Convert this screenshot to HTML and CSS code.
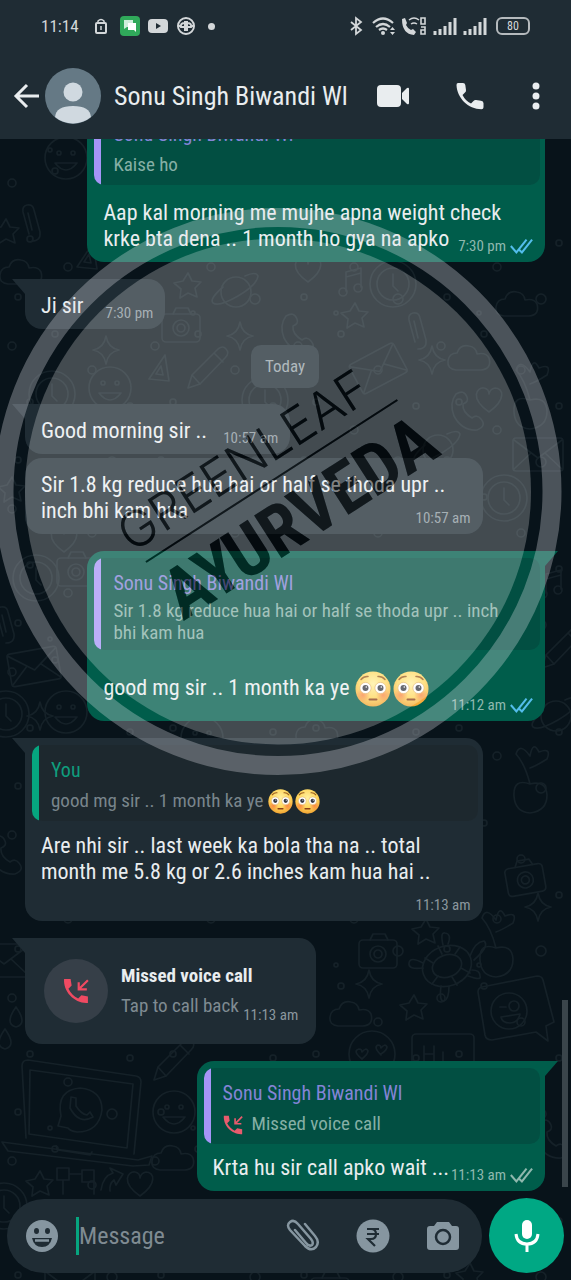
FILE: index.html
```html
<!DOCTYPE html>
<html lang="en">
<head>
<meta charset="utf-8">
<meta name="viewport" content="width=device-width, initial-scale=1">
<title>Sonu Singh Biwandi Wl</title>
<link rel="stylesheet" href="styles.css">
</head>
<body>
<svg class="defs" aria-hidden="true">
  <defs>
    <radialGradient id="skin" cx="50%" cy="35%" r="65%"><stop offset="0" stop-color="#fff0a0"/><stop offset=".6" stop-color="#ffd75e"/><stop offset="1" stop-color="#f2a432"/></radialGradient>
    <radialGradient id="blush"><stop offset="0" stop-color="#f8703e" stop-opacity=".75"/><stop offset="1" stop-color="#f8703e" stop-opacity="0"/></radialGradient>
    <symbol id="flushed" viewBox="0 0 36 36">
      <circle cx="18" cy="18" r="17.5" fill="url(#skin)"/>
      <circle cx="8" cy="24" r="7" fill="url(#blush)"/><circle cx="28" cy="24" r="7" fill="url(#blush)"/>
      <circle cx="10.500" cy="17" r="5.600" fill="#fff" stroke="#d9a050" stroke-width=".6"/><circle cx="25.500" cy="17" r="5.600" fill="#fff" stroke="#d9a050" stroke-width=".6"/>
      <circle cx="10.500" cy="17" r="3" fill="#383a44"/><circle cx="25.500" cy="17" r="3" fill="#383a44"/>
      <circle cx="11.300" cy="16" r=".8" fill="#fff"/><circle cx="26.300" cy="16" r=".8" fill="#fff"/>
      <path d="M6 8.500q3-3.500 7-3M30 8.500q-3-3.500-7-3" fill="none" stroke="#9a5b1d" stroke-width="1.500" stroke-linecap="round"/>
      <path d="M14.500 28.500h7" stroke="#8a3e17" stroke-width="2" stroke-linecap="round"/>
    </symbol>
    <symbol id="ticks" viewBox="0 0 26 18">
      <path d="M2 9l6 7L19 2M11 13l3 3L25 2" fill="none" stroke="currentColor" stroke-width="2.200"/>
    </symbol>
    <symbol id="missed" viewBox="0 0 24 24">
      <path d="M1 1h6l1 6-3 3c2 4 5 7 9 9l3-3 6 1v6C11 24 0 13 1 1z" fill="currentColor"/>
      <path d="M23 2l-8 8M14.500 4v6.500H22" fill="none" stroke="currentColor" stroke-width="2"/>
    </symbol>
    <symbol id="phone" viewBox="0 0 28 28">
      <path d="M2 1h5q2 0 2.300 2L10 8q.2 1.500-1 2.500L6.500 13q3 6 8.500 8.500l2.500-2.500q1-1.200 2.500-1l5 .8q2.500.4 2.500 2.500v4q0 2-2 2C12 27 1 16 .5 3q0-2 1.500-2z" fill="currentColor"/>
    </symbol>

    <g id="d-star"><path d="M0-13l4 8 9 1-6 6 2 9-9-4-8 5 1-9-7-6 9-2z"/></g>
    <g id="d-spark"><path d="M0-14q2 12 13 14-11 2-13 14-2-12-13-14 11-2 13-14z"/></g>
    <g id="d-planet"><circle r="15"/><path d="M-13-5q-14 12-10 16 6 4 25-7t20-20q-2-5-13 0"/></g>
    <g id="d-camera"><rect x="-19" y="-12" width="38" height="28" rx="4"/><circle cy="2" r="8"/><circle cy="2" r="4"/><path d="M-8-12l3-6H7l3 6"/></g>
    <g id="d-cloud"><path d="M-16 10q-9-1-8-9t9-8q3-9 12-7 7 1 8 8 9-2 12 4 3 11-8 12z"/></g>
    <g id="d-mail"><rect x="-25" y="-16" width="50" height="33" rx="3"/><path d="M-24-14L0 4 24-14M-24 15L-7-1M24 15L7-1"/></g>
    <g id="d-note"><path d="M-6 9V-10L9-14V5M-6-5L9-9"/><circle cx="-9" cy="10" r="4"/><circle cx="6" cy="6" r="4"/></g>
    <g id="d-heart"><path d="M0 12C-20-2-12-13-5-12Q0-11 0-6 1-11 6-12C14-12 18-1 0 12z"/></g>
    <g id="d-drop"><path d="M0-11Q12 6 0 9-12 6 0-11z"/></g>
    <g id="d-call"><path d="M-14-18q8-5 11 3 2 5-4 7-1 8 9 14 5-4 9 1 6 7-4 11-15 1-23-14-5-13 2-22z"/></g>
    <g id="d-smile"><circle r="21"/><circle cx="-7" cy="-5" r="2"/><circle cx="7" cy="-5" r="2"/><path d="M-11 5q11 14 22 0z"/></g>
    <g id="d-disc"><circle r="23"/><circle r="16"/><path d="M0-10V2l5 5"/></g>
    <g id="d-clip"><path d="M-9 12L-15-10q-1-6 4-7 6-1 7 5l6 22q1 9-8 9M-10-9L-6 8"/></g>
    <g id="d-plant"><path d="M0 20Q-5 0-14-10-10-22 0-8 3-24 9-12 22-17 17-5 6 2 0 4M0 20q-17-6-16 12 1 16 16 17 17-2 17-18-1-15-17-11z"/></g>
    <g id="d-pencil"><path d="M-18 18l4-13L12-21q5-4 8 0 4 4-1 9L-6 14zM-14 5l8 9M8-17l9 9"/></g>
    <g id="d-tri"><path d="M-9 11L7-13 11 13zM-2 6l5-8 2 9z"/></g>
    <g id="d-turtle"><ellipse rx="25" ry="20" transform="rotate(-20)"/><ellipse rx="15" ry="11" transform="rotate(-20)"/><path d="M-24 2q-15 2-14-5t14 0M23-10q5-14 14-15 6 5-10 19M-4-21q-3-13 2-12 7 1 3 11M-6 20q-2 16 3 15 5-2 5-15M21 10q14 5 12 0 0-6-8-6M-14-3l-8-5M-5-12l-4-8M8-12l5-7M14 2l9 5M5 11l5 8M-9 10l-6 8"/></g>
  </defs>
</svg>

<header class="top">
  <div class="status">
    <span class="clock">11:14</span>
    <svg class="lock" viewBox="0 0 12 16"><rect x="1" y="5" width="10" height="10" rx="1" fill="none" stroke="#d3d7d9" stroke-width="2"/><path d="M3 5V3q3-3 6 0v2M6 8v4" fill="none" stroke="#d3d7d9" stroke-width="1.500"/></svg>
    <svg class="app" viewBox="0 0 20 20"><rect width="20" height="20" rx="4" fill="#30a95a"/><path d="M4 4h9v7H7l-3 2z" fill="#cfeedb"/><path d="M8 7h8v9l-2-2H8z" fill="#fff"/></svg>
    <svg class="app" viewBox="0 0 20 20"><rect y="3" width="20" height="14" rx="4" fill="#d3d7d9"/><path d="M8 7l5 3-5 3z" fill="#1f2c34"/></svg>
    <svg class="app" viewBox="0 0 20 20"><circle cx="10" cy="10" r="8" fill="none" stroke="#d3d7d9" stroke-width="2"/><path d="M9 5v10M11 5v10M9 7q-5 0-4 4h10q1-4-4-4M2 10h3M15 10h3" fill="none" stroke="#d3d7d9" stroke-width="2"/></svg>
    <span class="dot"></span>
    <span class="grow"></span>
    <svg class="bt" viewBox="0 0 13 20"><path d="M1 6l10 8-5 4V2l5 4-10 8" fill="none" stroke="#d3d7d9" stroke-width="1.800"/></svg>
    <svg class="wifi" viewBox="0 0 25 20"><path d="M1 7q10-9 20 0M4 11q7-6 14 0M7 14q4-3 8 0" fill="none" stroke="#d3d7d9" stroke-width="2.200"/><circle cx="11" cy="17" r="2" fill="#d3d7d9"/><path d="M18 14l2.500-3 2.500 3zM18 16h5l-2.500 3z" fill="#d3d7d9"/></svg>
    <svg class="wifi" viewBox="0 0 25 20"><path d="M1 3l3-1 2 5-1 2q2 4 5 5l2-1 3 3-2 3Q1 18 1 3z" fill="#d3d7d9"/><path d="M8 4q5-4 10 0M10 8q3-2 6 0" fill="none" stroke="#d3d7d9" stroke-width="1.500"/><path d="M20 2h4v6h-4zM20 11h4v3h-4v4h4v-4" fill="none" stroke="#d3d7d9" stroke-width="1.600"/></svg>
    <svg class="bars" viewBox="0 0 24 18"><path d="M2 18v-4M7 18v-6M12 18V9M17 18V5M22 18V1" stroke="#d3d7d9" stroke-width="3"/></svg>
    <svg class="bars" viewBox="0 0 24 18"><path d="M2 18v-4M7 18v-6M12 18V9M17 18V5M22 18V1" stroke="#d3d7d9" stroke-width="3"/></svg>
    <span class="battery">80</span>
  </div>
  <div class="bar">
    <button class="icon" aria-label="Back"><svg width="26" height="26" viewBox="0 0 26 26"><path d="M14 2L3 13l11 11M3 13h23" fill="none" stroke="currentColor" stroke-width="3"/></svg></button>
    <svg class="avatar" viewBox="0 0 56 56"><circle cx="28" cy="28" r="28" fill="#657985"/><circle cx="28" cy="24" r="9.500" fill="#d0d9e0"/><path d="M10 49q1-11 18-11t18 11a28 28 0 0 1-36 0z" fill="#d0d9e0"/></svg>
    <h1>Sonu Singh Biwandi Wl</h1>
    <button class="icon video" aria-label="Video call"><svg width="34" height="24" viewBox="0 0 34 24"><rect x="1" y="1" width="24" height="22" rx="4" fill="currentColor"/><path d="M26 9l5-5q2-1 2 1v14q0 2-2 1l-5-5z" fill="currentColor"/></svg></button>
    <button class="icon call" aria-label="Voice call"><svg width="28" height="28"><use href="#phone"/></svg></button>
    <button class="icon" aria-label="More options"><svg width="8" height="28" viewBox="0 0 8 28"><circle cx="4" cy="4" r="3.500" fill="currentColor"/><circle cx="4" cy="14" r="3.500" fill="currentColor"/><circle cx="4" cy="24" r="3.500" fill="currentColor"/></svg></button>
  </div>
</header>

<main class="chat">
  <svg class="wallpaper" viewBox="0 139 571 1141" preserveAspectRatio="xMidYMin slice" aria-hidden="true">
    <defs><pattern id="dots" width="143" height="163" patternUnits="userSpaceOnUse"><g fill="none" stroke="#152128" stroke-width="1.500"><circle cx="12" cy="20" r="4"/><circle cx="55" cy="8" r="3"/><circle cx="92" cy="44" r="4"/><circle cx="130" cy="80" r="3"/><circle cx="30" cy="76" r="3"/><circle cx="68" cy="104" r="4"/><circle cx="112" cy="136" r="5"/><circle cx="18" cy="134" r="3"/><circle cx="50" cy="150" r="2"/></g></pattern></defs>
    <rect y="139" width="571" height="1141" fill="url(#dots)"/>
    <g fill="none" stroke="#152128" stroke-width="1.700" stroke-linejoin="round" stroke-linecap="round">
      <use href="#d-smile" x="66" y="158"/><use href="#d-clip" x="38" y="222"/><use href="#d-cloud" x="24" y="274"/><use href="#d-star" x="6" y="232"/><use href="#d-tri" x="86" y="256"/>
      <use href="#d-star" x="188" y="286"/><use href="#d-planet" x="236" y="292"/><use href="#d-heart" x="308" y="270"/><use href="#d-note" x="352" y="282"/><use href="#d-disc" x="393" y="284"/><use href="#d-cloud" x="520" y="306"/><use href="#d-star" x="355" y="316"/>
      <use href="#d-camera" x="181" y="326"/><use href="#d-call" x="300" y="334"/><use href="#d-spark" x="240" y="336"/><use href="#d-clip" x="424" y="330"/><use href="#d-mail" x="378" y="368" transform="rotate(-28 378 368)"/><use href="#d-spark" x="432" y="360"/><use href="#d-cloud" x="472" y="360"/><use href="#d-spark" x="106" y="350"/>
      <use href="#d-tri" x="158" y="368"/><use href="#d-pencil" x="206" y="370"/><use href="#d-disc" x="52" y="394"/><use href="#d-smile" x="110" y="388"/><use href="#d-disc" x="265" y="400"/><use href="#d-call" x="470" y="412"/><use href="#d-heart" x="489" y="400"/><use href="#d-plant" x="530" y="380"/>
      <use href="#d-planet" x="438" y="450"/><use href="#d-disc" x="504" y="498"/><use href="#d-mail" x="538" y="454"/><use href="#d-star" x="12" y="490"/><use href="#d-disc" x="36" y="578"/><use href="#d-camera" x="76" y="570"/><use href="#d-heart" x="64" y="540"/><use href="#d-note" x="552" y="584"/>
      <use href="#d-mail" x="34" y="666" transform="rotate(-10 34 666)"/><use href="#d-clip" x="12" y="624"/><use href="#d-smile" x="66" y="712"/><use href="#d-spark" x="40" y="716"/><use href="#d-disc" x="6" y="714"/><use href="#d-planet" x="556" y="716"/><use href="#d-pencil" x="560" y="650"/>
      <use href="#d-cloud" x="320" y="734"/><use href="#d-smile" x="202" y="738"/><use href="#d-plant" x="530" y="764"/><use href="#d-camera" x="525" y="878" transform="rotate(-10 525 878)"/><use href="#d-spark" x="538" y="907"/><use href="#d-plant" x="496" y="928"/><use href="#d-turtle" x="447" y="966"/><use href="#d-star" x="426" y="932"/>
      <use href="#d-star" x="414" y="1008"/><use href="#d-camera" x="378" y="952"/><use href="#d-cloud" x="354" y="1016"/><use href="#d-spark" x="369" y="984"/><use href="#d-call" x="8" y="856"/><use href="#d-mail" x="4" y="960"/><use href="#d-drop" x="5" y="1040"/><use href="#d-drop" x="16" y="1018"/>
      <path d="M478 992q0-4 4-5l55-11q5 0 6 4l11 42-8 4 2 15-12-9-44 8q-6 0-7-5z"/><circle cx="509" cy="1011" r="18"/><circle cx="514" cy="1006" r="5"/><path d="M500 1007h6M501 1017l19-3q-2 9-10 9-8 0-9-6z"/>
      <circle cx="372" cy="1054" r="23"/><path d="M362 1059q-10-8-3-10 3 0 3 3 4-5 6-1 0 3-6 8M381 1055q-8-8-3-10 3 0 3 3 4-5 6-1 0 3-6 7"/><rect x="412" y="1034" width="62" height="45" rx="4"/><path d="M424 1046v16M434 1046v16M424 1054h10M443 1052v10"/>
      <path d="M26 1138L22 1066q0-6 6-6l108 16q5 1 5 6l-7 72M29 1134l1-64 103 14-6 64zM2 1142l136 18 14-4-3 9-16 1L8 1151zM56 1146l2 4 32 5 2-3M58 1126l3-10q-5-26 19-28 22 2 22 22-3 22-25 22-7-1-9-4z"/><path d="M71 1097l5 1v8q5 8 11 9l3-3 3 5q-14 8-23-9z"/>
      <use href="#d-pencil" x="172" y="1062"/><use href="#d-smile" x="174" y="1112"/><use href="#d-cloud" x="176" y="1160"/><use href="#d-star" x="40" y="1184"/><path d="M57 1168h12v12H57zM82 1170h12v12H82zM69 1174h13M63 1180v14M94 1180v14M101 1190q2-14 12-17l-3-5 13 6-7 11-2-5q-5 4-4 11"/><use href="#d-disc" x="4" y="1206"/><use href="#d-heart" x="140" y="1184"/><use href="#d-call" x="554" y="1140"/><use href="#d-star" x="470" y="1276"/><use href="#d-mail" x="70" y="1286"/><use href="#d-camera" x="330" y="1290"/>
    </g>
  </svg>

  <section class="messages" aria-label="Messages">
    <article class="msg out wide first">
      <blockquote class="quote"><cite>Sonu Singh Biwandi Wl</cite><p>Kaise ho</p></blockquote>
      <p class="text">Aap kal morning me mujhe apna weight check<br>krke bta dena .. 1 month ho gya na apko<span class="meta">7:30 pm <svg class="read"><use href="#ticks"/></svg></span></p>
    </article>
    <article class="msg in tail short"><p class="text">Ji sir<span class="meta">7:30 pm</span></p></article>
    <div class="day">Today</div>
    <article class="msg in tail mid"><p class="text">Good morning sir ..<span class="meta">10:57 am</span></p></article>
    <article class="msg in wide next"><p class="text">Sir 1.8 kg reduce hua hai or half se thoda upr ..<br>inch bhi kam hua<span class="meta">10:57 am</span></p></article>
    <article class="msg out tail wide">
      <blockquote class="quote long"><cite>Sonu Singh Biwandi Wl</cite><p>Sir 1.8 kg reduce hua hai or half se thoda upr .. inch<br>bhi kam hua</p></blockquote>
      <p class="text tall">good mg sir .. 1 month ka ye <svg class="emoji" role="img" aria-label="😳"><use href="#flushed"/></svg><svg class="emoji" role="img" aria-label="😳"><use href="#flushed"/></svg><span class="meta">11:12 am <svg class="read"><use href="#ticks"/></svg></span></p>
    </article>
    <article class="msg in tail wide">
      <blockquote class="quote you"><cite>You</cite><p>good mg sir .. 1 month ka ye <svg class="emoji" role="img" aria-label="😳"><use href="#flushed"/></svg><svg class="emoji" role="img" aria-label="😳"><use href="#flushed"/></svg></p></blockquote>
      <p class="text">Are nhi sir .. last week ka bola tha na .. total<br>month me 5.8 kg or 2.6 inches kam hua hai ..<br><span class="meta">11:13 am</span></p>
    </article>
    <article class="msg in tail missed">
      <span class="badge"><svg width="26" height="26"><use href="#missed"/></svg></span>
      <div class="info"><strong>Missed voice call</strong><span>Tap to call back</span></div>
      <span class="meta">11:13 am</span>
    </article>
    <article class="msg out tail reply">
      <blockquote class="quote"><cite>Sonu Singh Biwandi Wl</cite><p><svg class="mini" width="20" height="20"><use href="#missed"/></svg>Missed voice call</p></blockquote>
      <p class="text">Krta hu sir call apko wait ...<span class="meta">11:13 am <svg class="sent"><use href="#ticks"/></svg></span></p>
    </article>
    <span class="scroll"></span>
  </section>

  <form class="composer">
    <div class="field">
      <button type="button" class="icon" aria-label="Emoji"><svg width="34" height="34" viewBox="0 0 34 34"><circle cx="17" cy="17" r="16" fill="currentColor"/><ellipse cx="11.500" cy="12" rx="2.500" ry="3" fill="#1f2c34"/><ellipse cx="22.500" cy="12" rx="2.500" ry="3" fill="#1f2c34"/><path d="M7 19h20q-2 9-10 9T7 19z" fill="#1f2c34"/><path d="M10 21.500h14" stroke="currentColor" stroke-width="2.500"/></svg></button>
      <span class="caret"></span>
      <input type="text" placeholder="Message" aria-label="Message">
      <button type="button" class="icon attach" aria-label="Attach"><svg width="34" height="34" viewBox="0 0 34 34"><path d="M19 5l10 12q5 6 1 11-5 5-11-1L4 11Q0 6 4 3q4-3 8 2l13 15q3 4 1 6-3 2-6-2L9 11" fill="none" stroke="currentColor" stroke-width="2.500" stroke-linecap="round"/></svg></button>
      <button type="button" class="icon pay" aria-label="Payment"><svg width="34" height="34" viewBox="0 0 34 34"><circle cx="17" cy="17" r="16.500" fill="currentColor"/><path d="M11 10h12M11 15h12M11 10h4q5 0 5 5t-5 5h-3l7 7" fill="none" stroke="#1f2c34" stroke-width="2.200"/></svg></button>
      <button type="button" class="icon" aria-label="Camera"><svg width="34" height="34" viewBox="0 0 34 34"><path d="M11 3h12l3 4h4q3 0 3 3v18q0 3-3 3H4q-3 0-3-3V10q0-3 3-3h4z" fill="currentColor"/><circle cx="17" cy="18" r="7" fill="none" stroke="#1f2c34" stroke-width="2.500"/></svg></button>
    </div>
    <button type="button" class="mic" aria-label="Record voice message"><svg width="26" height="34" viewBox="0 0 26 34"><rect x="8" y="1" width="10" height="19" rx="5" fill="#fff"/><path d="M2 15q1 10 11 10t11-10M13 25v8" fill="none" stroke="#fff" stroke-width="3"/></svg></button>
  </form>

  <svg class="stamp" viewBox="0 139 571 1141" preserveAspectRatio="xMidYMin slice" aria-hidden="true">
    <defs>
      <g id="brand" transform="translate(146 562) rotate(-32.800)">
        <path d="M0-1H299V1H0z"/>
        <text class="brand-top" x="-7" y="-15">GREENLEAF</text>
        <text class="brand" x="-1" y="70">AYURVEDA</text>
      </g>
      <mask id="cut" maskUnits="userSpaceOnUse" x="0" y="139" width="571" height="1141">
        <rect y="139" width="571" height="1141" fill="#fff"/>
        <use href="#brand" fill="#000"/>
      </mask>
    </defs>
    <circle cx="278" cy="491.500" r="253" fill="#fff" fill-opacity=".24" mask="url(#cut)"/>
    <circle cx="278" cy="491.500" r="274" fill="none" stroke="#e8e8f0" stroke-opacity=".3" stroke-width="19"/>
    <use href="#brand" fill="#000" fill-opacity=".45"/>
  </svg>
</main>
</body>
</html>
```
FILE: styles.css
```css
* { box-sizing: border-box; }
body {
  margin: 0;
  height: 100vh;
  display: flex;
  flex-direction: column;
  background: #08131a;
  color: #e9edef;
  font-family: "Liberation Sans Narrow", "Roboto Condensed", Roboto, sans-serif;
}
h1, p, blockquote { margin: 0; }
button { border: 0; padding: 0; background: none; color: inherit; display: flex; align-items: center; justify-content: center; }
svg { flex: none; }
.defs { position: absolute; width: 0; height: 0; }
.grow { flex: 1; }

.top { background: #1f2c34; flex: none; }
.status { height: 52px; display: flex; align-items: center; padding: 0 41px; color: #d3d7d9; }
.clock { width: 54px; font-size: 17px; white-space: nowrap; }
.lock { width: 12px; height: 16px; margin-right: 13px; }
.app { width: 20px; height: 20px; margin-right: 8px; }
.dot { width: 7px; height: 7px; border-radius: 50%; background: #d3d7d9; margin-left: 4px; }
.bt { width: 13px; height: 20px; margin-right: 9px; }
.wifi { width: 25px; height: 20px; margin-right: 4px; }
.bars { width: 24px; height: 18px; margin: 0 3px; }
.battery {
  width: 34px; height: 18px; margin-left: 6px;
  border: 2px solid #b5babd; border-radius: 6px;
  font-size: 12px; line-height: 14px; text-align: center;
}
.bar { height: 87px; display: flex; align-items: center; padding: 0 31px 0 13px; }
.avatar { width: 56px; height: 56px; margin: 0 13px 0 6px; }
h1 { flex: 1; font-size: 26px; font-weight: 400; line-height: 32px; white-space: nowrap; }
.video { margin-right: 46px; }
.call { margin-right: 48px; }

.chat { flex: 1; min-height: 0; position: relative; z-index: 0; display: flex; flex-direction: column; overflow: hidden; }
.wallpaper, .stamp { position: absolute; inset: 0; width: 100%; height: 100%; pointer-events: none; }
.wallpaper { z-index: -1; }
.brand-top { font: 300 50px Inter, sans-serif; }
.brand { font: 700 71px "Liberation Sans Narrow", "Roboto Condensed", Roboto, sans-serif; }

.messages {
  flex: 1; min-height: 0; position: relative;
  display: flex; flex-direction: column; justify-content: flex-end;
  padding: 0 26px 7px 25px;
}
.msg { position: relative; flex: none; margin-top: 17px; border-radius: 17px; padding: 7px; }
.msg.in { align-self: flex-start; background: #1f2c34; }
.msg.out { align-self: flex-end; background: #005d4b; }
.msg.next { margin-top: 4px; }
.wide { width: 88%; }
.short { width: 27%; }
.mid { width: 51%; }
.reply { width: 67%; }
.in.tail { border-top-left-radius: 0; }
.out.tail { border-top-right-radius: 0; }
.tail::before { content: ""; position: absolute; top: 0; width: 13px; height: 15px; background: inherit; }
.in.tail::before { right: 100%; clip-path: polygon(0 0, 100% 0, 100% 100%); }
.out.tail::before { left: 100%; clip-path: polygon(0 0, 100% 0, 0 100%); }

.text { display: flow-root; padding: 7px 5px 0 9px; margin-bottom: -3px; font-size: 22px; line-height: 26px; }
.quote + .text { padding-top: 15px; }
.quote.you + .text { padding-top: 12px; }
.reply .quote + .text { padding-top: 11px; }
.meta { float: right; margin-top: 8px; display: flex; align-items: center; gap: 3px; font-size: 15px; line-height: 24px; color: #8b979e; white-space: nowrap; }
.out .meta { color: #8fb8ae; }
.read, .sent { width: 24px; height: 18px; }
.out .meta .read { color: #53bdeb; }
.tall { line-height: 46px; }
.tall .meta { margin-top: 28px; }
.emoji { width: 36px; height: 36px; vertical-align: middle; margin-right: 2px; }

.quote { border-radius: 10px; background: linear-gradient(to right, #a695f8 7px, #024f42 7px); padding: 11px 10px 6px 19px; color: #86b0a6; margin-right: -2px; }
.quote cite { display: block; font-style: normal; font-size: 20px; line-height: 28px; color: #8484d6; }
.quote p { margin-top: 3px; font-size: 19px; line-height: 28px; white-space: nowrap; }
.quote.long p { line-height: 22px; }
.quote .emoji { width: 25px; height: 25px; }
.quote.you { background: linear-gradient(to right, #06a57f 7px, #1d282e 7px); color: #79858c; }
.you cite { color: #0f9d7d; }
.mini { vertical-align: middle; margin-right: 9px; color: #e85b6d; }

.missed { display: flex; align-items: center; width: 56%; padding: 21px 18px 21px 19px; }
.badge { width: 64px; height: 64px; flex: none; border-radius: 50%; background: #363f48; color: #f04a62; display: flex; align-items: center; justify-content: center; margin-right: 13px; }
.info { flex: 1; min-width: 0; display: flex; flex-direction: column; font-size: 19px; line-height: 30px; white-space: nowrap; }
.info span { color: #7f8b92; }
.missed .meta { align-self: flex-end; margin: 0 0 -4px; }

.day { align-self: center; margin: 16px 0 -1px; padding: 0 14px; border-radius: 10px; background: #1f2c34; color: #98a3a9; font-size: 17px; line-height: 43px; }
.scroll { position: absolute; right: 3px; bottom: 11px; width: 6px; height: 187px; background: #3a454b; }

.composer { display: flex; align-items: center; gap: 7px; padding: 0 7px 7px; }
.field { flex: 1; min-width: 0; height: 74px; border-radius: 37px; background: #1f2c34; display: flex; align-items: center; padding: 0 22px 0 18px; color: #8696a0; }
.caret { flex: none; width: 3px; height: 38px; margin-left: 17px; background: #06a57f; }
.field input { flex: 1; min-width: 0; border: 0; padding: 0; background: none; outline: 0; color: #e9edef; font: inherit; font-size: 24px; line-height: 38px; }
.field input::placeholder { color: #7f8b92; opacity: 1; }
.attach, .pay { margin-right: 36px; }
.mic { flex: none; width: 75px; height: 75px; border-radius: 50%; background: #00a884; }
```
